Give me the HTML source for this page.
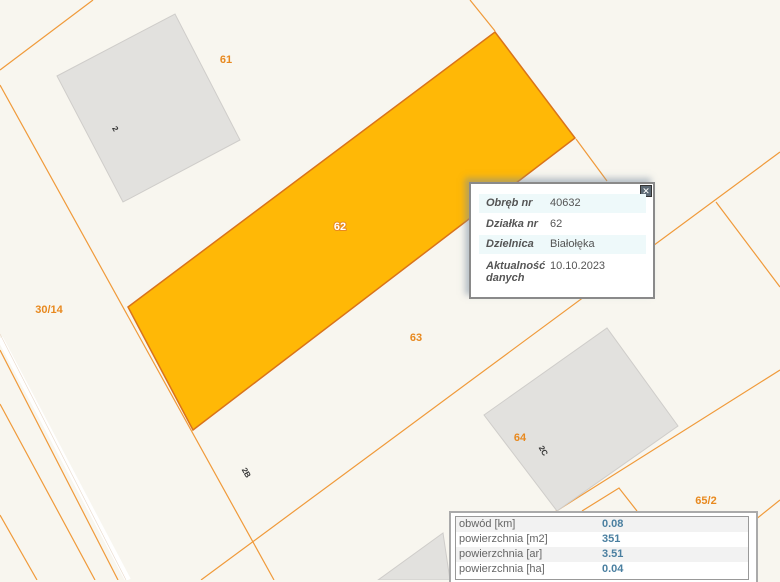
<!DOCTYPE html>
<html><head><meta charset="utf-8"><style>
body{margin:0;width:780px;height:580px;overflow:hidden;background:#f8f6ef;font-family:"Liberation Sans",sans-serif;position:relative}
svg{position:absolute;left:0;top:0}
.pop{position:absolute;left:469px;top:182px;width:182px;height:113px;background:#fff;border:2px solid #8a8a8a;box-shadow:-4px -4px 6px rgba(120,140,160,.5)}
.row{position:absolute;left:8px;width:167px;height:19px}
.lb{position:absolute;left:7px;font-weight:bold;font-style:italic;color:#555;font-size:11px}
.vl{position:absolute;left:71px;color:#555;font-size:11px}
.x{position:absolute;right:1px;top:1px;width:10px;height:10px;background:#5d6a75;border:1px solid #333;color:#fff;font-size:9px;line-height:10px;text-align:center}
.tb{position:absolute;left:449px;top:511px;width:305px;height:69px;background:#fff;border:2px solid #aaa;border-bottom:none}
.in{position:absolute;left:4px;top:3px;width:292px;height:62px;border:1px solid #999}
.tr{height:15px;font-size:11px;color:#666;position:relative;line-height:15px}
.tr span{position:absolute;left:146px;color:#4a7fa0;font-weight:bold}
</style></head><body>
<svg width="780" height="580" viewBox="0 0 780 580">
<g fill="none" stroke="#f09a3a" stroke-width="1.2">
<line x1="0" y1="70" x2="93" y2="0"/>
<line x1="0" y1="85" x2="274" y2="580"/>
<line x1="470" y1="0" x2="495" y2="31"/>
<line x1="576" y1="139" x2="607" y2="181"/>
<line x1="780" y1="152" x2="201" y2="580"/>
<line x1="716" y1="202" x2="780" y2="287"/>
<line x1="780" y1="370" x2="447" y2="580"/>
<polyline points="582,511 619,488 637,511"/>
<line x1="0" y1="350" x2="118" y2="580"/>
<line x1="0" y1="404" x2="95" y2="580"/>
<line x1="0" y1="515" x2="37" y2="580"/>
<line x1="780" y1="500" x2="755" y2="520"/>
</g>
<line x1="0" y1="338" x2="128" y2="580" stroke="#fff" stroke-width="6"/>
<line x1="0" y1="334" x2="126" y2="580" stroke="#e8d8c8" stroke-width="0.6"/>
<g fill="#e2e1de" stroke="#cfcdca">
<polygon points="57,76 175,14 240,140 123,202"/>
<polygon points="484,415 607,328 678,426 557,511"/>
<polygon points="378,580 443,533 450,580"/>
</g>
<polygon points="128,307 495,32 575,138 193,430" fill="#ffb806" stroke="#d9731a" stroke-width="1.5"/>
<g font-family="Liberation Sans" font-weight="bold" font-size="11" fill="#e8891f" text-anchor="middle">
<text x="226" y="63">61</text>
<text x="49" y="313">30/14</text>
<text x="416" y="341">63</text>
<text x="520" y="441">64</text>
<text x="706" y="504">65/2</text>
<text x="340" y="230" fill="#fff" stroke="#e8891f" stroke-width="2" paint-order="stroke">62</text>
</g>
<g font-family="Liberation Sans" font-weight="bold" font-size="8" fill="#333" text-anchor="middle">
<text transform="translate(113,130) rotate(60)">2</text>
<text transform="translate(244,474) rotate(60)">2B</text>
<text transform="translate(541,452) rotate(60)">2C</text>
</g>
</svg>
<div class="pop">
<div class="x">✕</div>
<div class="row" style="top:10px;background:#eef9fa"><span class="lb" style="top:3px">Obręb nr</span><span class="vl" style="top:3px">40632</span></div>
<div class="row" style="top:31px"><span class="lb" style="top:3px">Działka nr</span><span class="vl" style="top:3px">62</span></div>
<div class="row" style="top:51px;background:#eef9fa"><span class="lb" style="top:3px">Dzielnica</span><span class="vl" style="top:3px">Białołęka</span></div>
<div class="row" style="top:73px;height:32px"><span class="lb" style="top:3px;line-height:12px">Aktualność<br>danych</span><span class="vl" style="top:3px">10.10.2023</span></div>
</div>
<div class="tb"><div class="in">
<div class="tr" style="background:#f2f2f2">&nbsp;obwód [km]<span>0.08</span></div>
<div class="tr">&nbsp;powierzchnia [m2]<span>351</span></div>
<div class="tr" style="background:#f2f2f2">&nbsp;powierzchnia [ar]<span>3.51</span></div>
<div class="tr">&nbsp;powierzchnia [ha]<span>0.04</span></div>
</div></div>
</body></html>
